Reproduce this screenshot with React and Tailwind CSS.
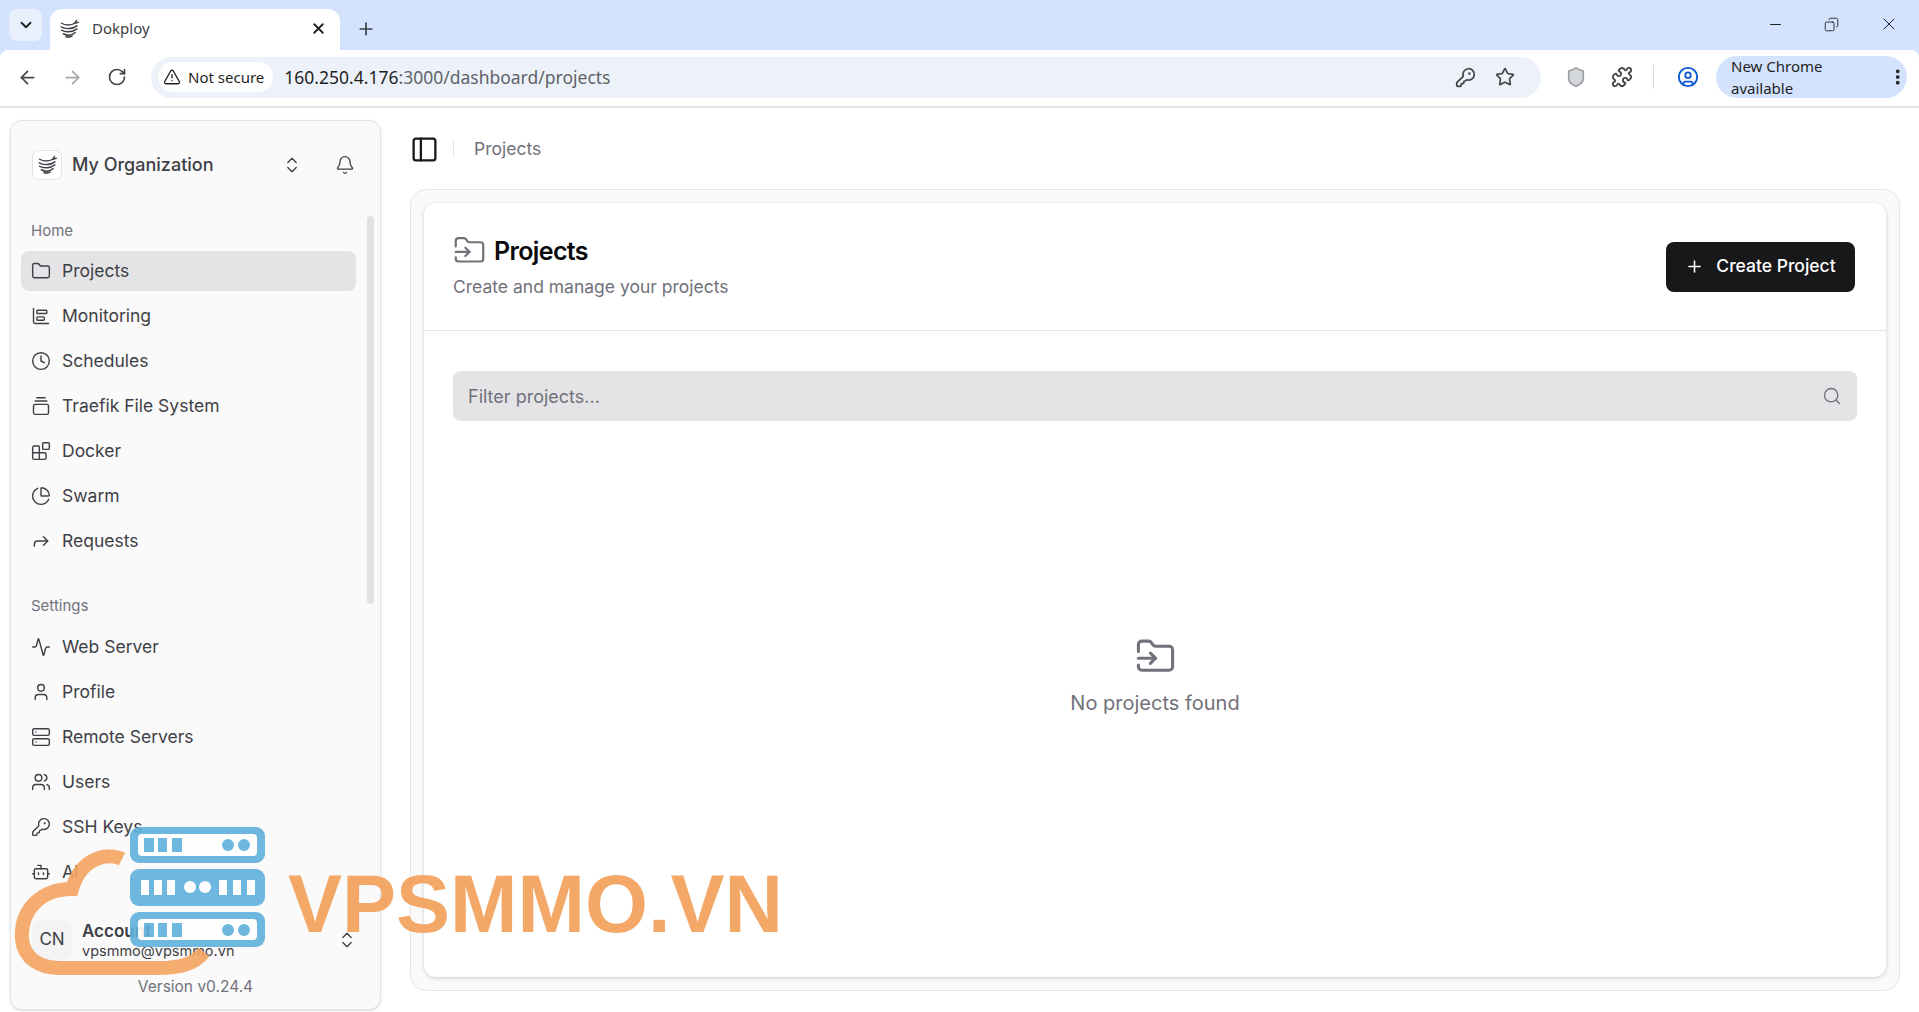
import React from "react";
import {
  Activity,
  ArrowLeft,
  ArrowRight,
  Bell,
  Blocks,
  Bot,
  ChartBarBig,
  ChevronDown,
  ChevronsUpDown,
  Clock,
  Copy,
  EllipsisVertical,
  Folder,
  FolderInput,
  Forward,
  GalleryVerticalEnd,
  KeyRound,
  Minus,
  PanelLeft,
  PieChart,
  Plus,
  Puzzle,
  RotateCw,
  Search,
  Server,
  Shield,
  Star,
  TriangleAlert,
  User,
  CircleUser,
  Users,
  X,
} from "lucide-react";

const homeItems = [
  { label: "Projects", icon: Folder, active: true },
  { label: "Monitoring", icon: ChartBarBig },
  { label: "Schedules", icon: Clock },
  { label: "Traefik File System", icon: GalleryVerticalEnd },
  { label: "Docker", icon: Blocks },
  { label: "Swarm", icon: PieChart },
  { label: "Requests", icon: Forward },
];

const settingsItems = [
  { label: "Web Server", icon: Activity },
  { label: "Profile", icon: User },
  { label: "Remote Servers", icon: Server },
  { label: "Users", icon: Users },
  { label: "SSH Keys", icon: KeyRound },
  { label: "AI", icon: Bot },
];

const DokployLogo = ({ className }) => (
  <svg viewBox="0 0 24 24" className={className} fill="none" stroke="currentColor" strokeWidth="1.7" strokeLinecap="round">
    <path d="M3 6c4 2.6 11 2.6 15 0" />
    <path d="M2.5 10c4 3 13 3 18 -1" />
    <path d="M3 14c4 2.6 12 2.6 17.500 -1.500" />
    <path d="M5 18c4 2.500 9 2.500 13.500 -1.500" />
    <path d="M8 21.500c2.500 .8 5 .5 7 -1" />
    <path d="M18 6l2 -3M18 6l4 -1" />
  </svg>
);

const NavItem = ({ item }) => {
  const Icon = item.icon;
  return (
    <div
      className={`flex h-10 items-center gap-[11px] rounded-lg px-[10px] text-[17.5px] text-[#3f3f46] ${
        item.active ? "bg-[#e4e4e7]" : ""
      }`}
    >
      <Icon size={20} strokeWidth={1.7} />
      <span>{item.label}</span>
    </div>
  );
};

const Sidebar = () => (
  <aside className="relative ml-[10px] mt-3 flex h-[890px] w-[371px] shrink-0 flex-col rounded-xl border border-[#e5e5e5] bg-[#fafafa] shadow-sm">
    <div className="flex h-[84px] shrink-0 items-center pl-[21px] pr-[25px] pt-[3px]">
      <div className="flex h-[30px] w-[30px] items-center justify-center rounded-md border border-[#e4e4e7] bg-white text-[#3f3f46]">
        <DokployLogo className="h-[21px] w-[21px]" />
      </div>
      <span className="ml-[10px] text-[18px] font-medium text-[#3f3f46]">My Organization</span>
      <ChevronsUpDown size={20} strokeWidth={1.6} className="ml-auto mr-[33px] text-[#3f3f46]" />
      <Bell size={20} strokeWidth={1.6} className="text-[#3f3f46]" />
    </div>
    <div className="flex-1 overflow-hidden pl-[10px] pr-[24px]">
      <div className="flex h-[50px] items-center pl-[10px] pt-[2px] text-[15px] text-[#71717a]">Home</div>
      <div className="-mt-[4px] flex flex-col gap-[5px]">
        {homeItems.map((item) => (
          <NavItem key={item.label} item={item} />
        ))}
      </div>
      <div className="mt-[25px] flex h-[40px] items-center pl-[10px] text-[15px] text-[#71717a]">Settings</div>
      <div className="mt-[1px] flex flex-col gap-[5px]">
        {settingsItems.map((item) => (
          <NavItem key={item.label} item={item} />
        ))}
      </div>
    </div>
    {/* scrollbar */}
    <div className="absolute right-[6px] top-[95px] h-[388px] w-[7px] rounded-full bg-[#e2e2e2]" />
    <div className="absolute bottom-[12px] left-0 right-0 bg-[#fafafa]">
      <div className="flex h-[58px] items-center pl-[21px] pr-[23px]">
        <div className="flex h-10 w-10 items-center justify-center rounded-lg bg-[#f4f4f5] text-[17px] text-[#3f3f46]">CN</div>
        <div className="ml-[10px] flex flex-col">
          <span className="text-[17px] font-semibold leading-[22px] text-[#3f3f46]">Account</span>
          <span className="text-[14.5px] leading-[18px] text-[#3f3f46]">vpsmmo@vpsmmo.vn</span>
        </div>
        <ChevronsUpDown size={20} strokeWidth={1.6} className="ml-auto text-[#3f3f46]" />
      </div>
      <div className="mt-[8px] text-center text-[15.500px] leading-5 text-[#71717a]">Version v0.24.4</div>
    </div>
  </aside>
);

const Toolbar = () => (
  <div className="flex h-[58px] items-center rounded-t-lg border-b-2 border-[#e3e3e3] bg-white pb-[2px]">
    <ArrowLeft size={21} strokeWidth={2} className="ml-[17px] text-[#444746]" />
    <ArrowRight size={21} strokeWidth={2} className="ml-[24px] text-[#a5a7a8]" />
    <RotateCw size={20} strokeWidth={2} className="ml-[24px] text-[#444746]" />
    <div className="ml-[24px] flex h-[41px] w-[1390px] items-center rounded-full bg-[#edf2fa] pl-[7px] pr-[26px]">
      <div className="flex h-[30px] items-center gap-[7px] rounded-full bg-white pl-[5px] pr-[9px] text-[15px] text-[#1f1f1f]">
        <TriangleAlert size={18} strokeWidth={1.8} />
        <span>Not secure</span>
      </div>
      <span className="ml-[11px] text-[17.500px] text-[#5f6368]">
        <span className="text-[#1f1f1f]">160.250.4.176</span>:3000/dashboard/projects
      </span>
      <KeyRound size={21} strokeWidth={2} className="ml-auto mr-[19px] text-[#444746]" />
      <Star size={20} strokeWidth={2} className="text-[#444746]" />
    </div>
    <Shield size={22} strokeWidth={1.8} fill="#d5d7da" className="ml-[24px] text-[#9aa0a6]" />
    <Puzzle size={22} strokeWidth={2} className="ml-[24px] text-[#444746]" />
    <div className="ml-[20px] h-[24px] w-[1px] bg-[#d3dbe6]" />
    <CircleUser size={22} strokeWidth={2} className="ml-[23px] text-[#0b57d0]" />
    <div className="ml-[17px] flex h-[42px] w-[191px] items-center rounded-full bg-[#d3e3fd] pl-[15px] text-[15px] text-[#1f1f1f]">
      <span>New Chrome available</span>
      <EllipsisVertical size={20} strokeWidth={2.6} className="ml-[3px]" />
    </div>
  </div>
);

const TabStrip = () => (
  <div className="flex h-[50px] items-end bg-[#d3e3fd]">
    <div className="mb-[9px] ml-[9px] flex h-[32px] w-[33px] items-center justify-center rounded-lg bg-[#e8f0fe]">
      <ChevronDown size={18} strokeWidth={2.4} className="text-[#1f1f1f]" />
    </div>
    <div className="ml-[8px] flex h-[41px] w-[290px] items-center rounded-t-xl bg-white pb-[2px] pl-[9px] pr-[13px] text-[15px] text-[#3c4043]">
      <DokployLogo className="h-[21px] w-[21px] text-[#3f3f46]" />
      <span className="ml-[12px]">Dokploy</span>
      <X size={17} strokeWidth={2.6} className="ml-auto text-[#1f1f1f]" />
    </div>
    <Plus size={20} strokeWidth={2} className="mb-[11px] ml-[16px] text-[#3c4043]" />
    <div className="mb-[16px] ml-auto flex items-center gap-[40px] pr-[20px] text-[#1f1f1f]">
      <Minus size={17} strokeWidth={1.4} />
      <Copy size={15} strokeWidth={1.4} className="-scale-x-100" />
      <X size={20} strokeWidth={1.2} />
    </div>
  </div>
);

const Watermark = () => (
  <div className="pointer-events-none absolute bottom-[33px] left-[14px] flex h-[152px] items-start">
    <svg width="256" height="152" viewBox="0 0 256 152" fill="none" className="opacity-90">
      <path
        d="M108 32C96 26 68 28 58 62C26 62 6 84 8 112C10 132 26 141 46 141H144C164 141 180 138 190 125"
        stroke="#f4a460"
        strokeWidth="14"
      />
      <g fill="#5fb0dc">
        <rect x="116" y="0" width="135" height="36" rx="9" />
        <rect x="116" y="42" width="135" height="37" rx="9" />
        <rect x="116" y="85" width="135" height="35" rx="9" />
      </g>
      <g fill="#ffffff">
        <rect x="124" y="7" width="119" height="22" rx="4" />
        <rect x="124" y="92" width="119" height="21" rx="4" />
      </g>
      <g fill="#5fb0dc">
        <rect x="130" y="11" width="10" height="14" />
        <rect x="144" y="11" width="9" height="14" />
        <rect x="158" y="11" width="10" height="14" />
        <circle cx="214" cy="18" r="6" />
        <circle cx="230" cy="18" r="6" />
        <rect x="130" y="96" width="10" height="14" />
        <rect x="144" y="96" width="9" height="14" />
        <rect x="158" y="96" width="10" height="14" />
        <circle cx="214" cy="103" r="6" />
        <circle cx="230" cy="103" r="6" />
      </g>
      <g fill="#ffffff">
        <rect x="127" y="53" width="8" height="15" />
        <rect x="140" y="53" width="8" height="15" />
        <rect x="153" y="53" width="8" height="15" />
        <circle cx="176" cy="60" r="6" />
        <circle cx="191" cy="60" r="6" />
        <rect x="205" y="53" width="8" height="15" />
        <rect x="219" y="53" width="8" height="15" />
        <rect x="233" y="53" width="8" height="15" />
      </g>
    </svg>
    <span className="ml-[18px] mt-[31px] font-['Liberation_Sans',sans-serif] text-[81px] font-bold leading-[92px] text-[#f4a460] opacity-95">
      VPSMMO.VN
    </span>
  </div>
);

const App = () => {
  return (
    <div className="relative h-[1012px] w-full overflow-hidden bg-[#d3e3fd] font-['Inter',sans-serif]">
      <div className="font-['Noto_Sans',sans-serif]">
        <TabStrip />
        <Toolbar />
      </div>
      <div className="flex h-[904px] bg-white">
        <Sidebar />
        <main className="ml-[29px] mr-[19px] flex-1">
          <div className="flex h-[81px] items-center pt-[1px] text-[#71717a]">
            <PanelLeft size={29} strokeWidth={1.9} className="text-[#18181b]" />
            <div className="ml-[14px] h-[18px] w-[1px] bg-[#e4e4e7]" />
            <span className="ml-[20px] text-[17.500px]">Projects</span>
          </div>
          <div className="flex h-[802px] flex-col rounded-2xl border border-[#e5e5e5] bg-[#fafafa] p-[13px]">
            <div className="flex flex-1 flex-col rounded-xl bg-white shadow-[0_1px_4px_rgba(0,0,0,0.18)]">
              <div className="flex h-[128px] shrink-0 items-center justify-between border-b border-[#e4e4e7] pl-[29px] pr-[31px]">
                <div className="flex flex-col gap-[8px]">
                  <div className="flex items-center gap-[8px]">
                    <FolderInput size={33} strokeWidth={1.6} className="text-[#71717a]" />
                    <span className="text-[25px] font-semibold leading-8 tracking-tight text-[#09090b]">Projects</span>
                  </div>
                  <span className="text-[17.500px] leading-6 text-[#71717a]">Create and manage your projects</span>
                </div>
                <button className="flex h-[50px] w-[189px] items-center justify-center gap-[12px] rounded-lg bg-[#18181b] text-[17.500px] font-medium text-white">
                  <Plus size={19} strokeWidth={2} />
                  Create Project
                </button>
              </div>
              <div className="flex flex-1 flex-col px-[29px] pt-[40px]">
                <div className="flex h-[50px] shrink-0 items-center justify-between rounded-lg bg-[#e4e4e7] pl-[15px] pr-[15px] text-[18px] text-[#71717a]">
                  <span>Filter projects...</span>
                  <Search size={20} strokeWidth={1.7} />
                </div>
                <div className="flex flex-1 flex-col items-center justify-center gap-[11px] pb-[44px] text-[#71717a]">
                  <FolderInput size={41} strokeWidth={1.8} />
                  <span className="text-[20px]">No projects found</span>
                </div>
              </div>
            </div>
          </div>
        </main>
      </div>
      <Watermark />
    </div>
  );
};

export default App;
